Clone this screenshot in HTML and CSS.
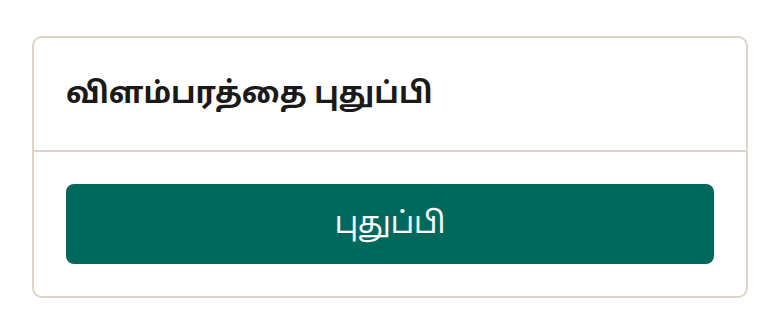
FILE: index.html
```html
<!DOCTYPE html>
<html lang="ta">
<head>
    <meta charset="UTF-8">
    <meta name="viewport" content="width=device-width, initial-scale=1.0">
    <title>விளம்பரத்தை புதுப்பி</title>
    <link rel="stylesheet" href="styles.css">
</head>
<body>
    <div class="renew-card">
        <div class="renew-header">
            <h2 class="renew-title">விளம்பரத்தை புதுப்பி</h2>
        </div>
        <div class="renew-body">
            <button class="renew-button">புதுப்பி</button>
        </div>
    </div>
</body>
</html>
```

FILE: styles.css
```css
body {
    font-family: 'Noto Sans', 'Noto Sans Tamil', sans-serif;
    background: #ffffff;
    color: #1a1a1a;
    margin: 0;
    padding: 36px 32px;
}

.renew-card {
    border: 2px solid #ddd5c6;
    border-radius: 10px;
    background: #ffffff;
}

.renew-header {
    padding: 30px 32px 34px;
    border-bottom: 2px solid #ddd5c6;
}

.renew-title {
    margin: 0;
    font-size: 29.5px;
    font-weight: bold;
    line-height: 48px;
}

.renew-body {
    padding: 32px 32px;
}

.renew-button {
    display: block;
    width: 100%;
    height: 80px;
    padding: 0 0 4px;
    font-family: inherit;
    font-size: 30px;
    color: #ffffff;
    background: #00695c;
    border: none;
    border-radius: 8px;
    cursor: pointer;
}
```
